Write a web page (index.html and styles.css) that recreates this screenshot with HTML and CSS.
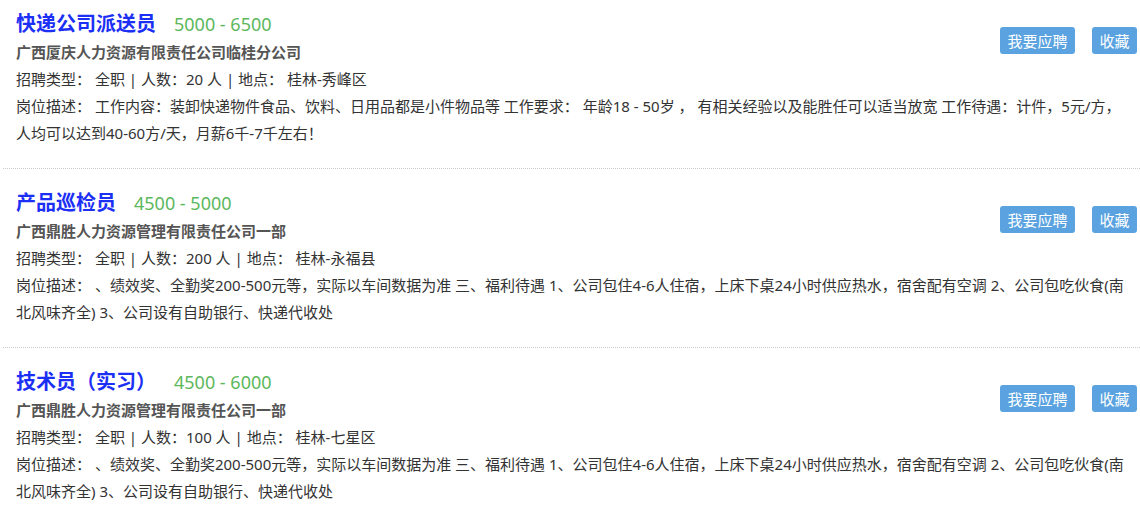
FILE: index.html
```html
<!DOCTYPE html>
<html lang="zh-CN">
<head>
    <meta charset="UTF-8">
    <meta name="viewport" content="width=device-width, initial-scale=1.0">
    <title>招聘信息</title>
    <link rel="stylesheet" href="styles.css">
</head>
<body>
    <div class="job-list">
        <div class="job">
            <div class="head">
                <div class="info">
                    <h3 class="title">快递公司派送员<span class="salary">5000 - 6500</span></h3>
                    <p class="company">广西厦庆人力资源有限责任公司临桂分公司</p>
                    <p class="meta">招聘类型： 全职 | 人数：20 人 | 地点： 桂林-秀峰区</p>
                </div>
                <div class="actions">
                    <button class="btn">我要应聘</button>
                    <button class="btn">收藏</button>
                </div>
            </div>
            <p class="desc">岗位描述： 工作内容：装卸快递物件食品、饮料、日用品都是小件物品等 工作要求： 年龄18 - 50岁 ， 有相关经验以及能胜任可以适当放宽 工作待遇：计件，5元/方，<br>人均可以达到40-60方/天，月薪6千-7千左右！</p>
        </div>

        <div class="job">
            <div class="head">
                <div class="info">
                    <h3 class="title">产品巡检员<span class="salary">4500 - 5000</span></h3>
                    <p class="company">广西鼎胜人力资源管理有限责任公司一部</p>
                    <p class="meta">招聘类型： 全职 | 人数：200 人 | 地点： 桂林-永福县</p>
                </div>
                <div class="actions">
                    <button class="btn">我要应聘</button>
                    <button class="btn">收藏</button>
                </div>
            </div>
            <p class="desc">岗位描述： 、绩效奖、全勤奖200-500元等，实际以车间数据为准 三、福利待遇 1、公司包住4-6人住宿，上床下桌24小时供应热水，宿舍配有空调 2、公司包吃伙食(南<br>北风味齐全) 3、公司设有自助银行、快递代收处</p>
        </div>

        <div class="job">
            <div class="head">
                <div class="info">
                    <h3 class="title">技术员（实习）<span class="salary">4500 - 6000</span></h3>
                    <p class="company">广西鼎胜人力资源管理有限责任公司一部</p>
                    <p class="meta">招聘类型： 全职 | 人数：100 人 | 地点： 桂林-七星区</p>
                </div>
                <div class="actions">
                    <button class="btn">我要应聘</button>
                    <button class="btn">收藏</button>
                </div>
            </div>
            <p class="desc">岗位描述： 、绩效奖、全勤奖200-500元等，实际以车间数据为准 三、福利待遇 1、公司包住4-6人住宿，上床下桌24小时供应热水，宿舍配有空调 2、公司包吃伙食(南<br>北风味齐全) 3、公司设有自助银行、快递代收处</p>
        </div>
    </div>
</body>
</html>
```

FILE: styles.css
```css
body {
    margin: 0;
    background: #fff;
    font-family: "Noto Sans", "Noto Sans CJK SC", sans-serif;
    color: #333;
}
.job-list {
    margin-left: 3px;
}
.job {
    padding: 19px 3px 21px 13px;
    border-bottom: 1px dotted #ccc;
}
.job:first-child {
    padding-top: 9px;
}
.head {
    display: flex;
    justify-content: space-between;
}
.title {
    margin: 0;
    font-size: 20px;
    line-height: 29px;
    font-weight: bold;
    color: #1c2ff5;
}
.salary {
    margin-left: 18px;
    font-size: 18px;
    font-weight: normal;
    color: #5cb85c;
}
.company {
    margin: 0;
    font-size: 15px;
    line-height: 27px;
    font-weight: bold;
    color: #555;
}
.meta, .desc {
    margin: 0;
    font-size: 15px;
    line-height: 27px;
    color: #333;
}
.actions {
    display: flex;
    gap: 17px;
    margin-top: 18px;
    align-items: flex-start;
}
.btn {
    height: 27px;
    padding: 0 7.5px;
    border: none;
    border-radius: 3px;
    background-color: #5aa3e0;
    color: #fff;
    font-family: "Noto Sans CJK SC", sans-serif;
    font-size: 15px;
    line-height: 27px;
    cursor: pointer;
}
.btn:hover {
    background-color: #3d8fd6;
}
```
